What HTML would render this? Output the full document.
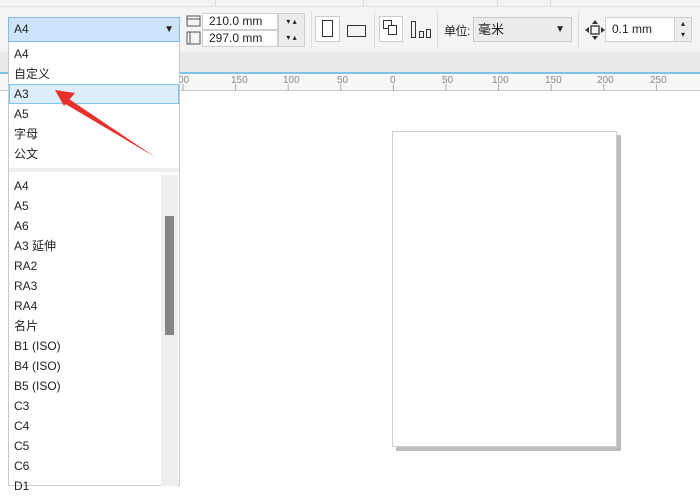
<!DOCTYPE html>
<html><head><meta charset="utf-8"><style>
*{margin:0;padding:0;box-sizing:border-box}
body{width:700px;height:486px;position:relative;overflow:hidden;background:#fff;font-family:"Liberation Sans","Noto Sans CJK SC",sans-serif;font-size:12px;color:#222}
.a{position:absolute}
.sep{position:absolute;width:1px;background:#dcdcdc}
.li{position:absolute;left:14px;font-size:12px;height:20px;line-height:20px}
.inp{position:absolute;background:#fff;border:1px solid #cfcfcf;padding-left:6px;font-size:12px}
</style></head><body>
<div class="a" style="left:0;top:0;width:700px;height:52px;background:#f4f4f4"></div>
<div class="a" style="left:0;top:6px;width:700px;height:1px;background:#e2e2e2"></div>
<div class="sep" style="left:215px;top:0;height:6px"></div>
<div class="sep" style="left:363px;top:0;height:6px"></div>
<div class="sep" style="left:497px;top:0;height:6px"></div>
<div class="sep" style="left:550px;top:0;height:6px"></div>
<div class="a" style="left:0;top:52px;width:700px;height:20px;background:#e9e9e9"></div>
<div class="a" style="left:0;top:72px;width:700px;height:2px;background:#7cc4e6"></div>
<div class="a" style="left:0;top:74px;width:700px;height:17px;background:#f7f7f7;border-bottom:1px solid #ccc"></div>
<svg class="a" style="left:0;top:74px" width="700" height="17">
<g stroke="#aaa" stroke-width="1">
<path d="M183 17v-7M235.6 17v-7M288.2 17v-7M340.8 17v-7M393.4 17v-7M446 17v-7M498.6 17v-7M551.2 17v-7M603.8 17v-7M656.4 17v-7M709 17v-7"/>
</g>
<g fill="#888" font-size="10" font-family="Liberation Sans">
<text x="178" y="9">00</text><text x="231" y="9">150</text><text x="283" y="9">100</text><text x="337" y="9">50</text><text x="390" y="9">0</text><text x="442" y="9">50</text><text x="492" y="9">100</text><text x="545" y="9">150</text><text x="597" y="9">200</text><text x="650" y="9">250</text>
</g>
<path d="M180 16.5h520" stroke="#ccc" stroke-dasharray="1 4.26"/>
</svg>
<div class="a" style="left:396px;top:135px;width:225px;height:316px;background:#bdbdbd"></div>
<div class="a" style="left:392px;top:131px;width:225px;height:316px;background:#fff;border:1px solid #cfcfcf"></div>
<svg class="a" style="left:185px;top:14px" width="18" height="32"><rect x="2" y="2" width="13" height="10" fill="none" stroke="#555"/><path d="M2 5h13" stroke="#555"/><rect x="2" y="18" width="13" height="12" fill="none" stroke="#555"/><path d="M5 18v12" stroke="#555"/></svg>
<div class="inp" style="left:202px;top:13px;width:76px;height:17px;line-height:15px">210.0 mm</div>
<div class="inp" style="left:202px;top:30px;width:76px;height:17px;line-height:15px">297.0 mm</div>
<div class="a" style="left:278px;top:13px;width:27px;height:34px;background:#ececec;border:1px solid #cfcfcf;font-size:8px;line-height:16px;text-align:center">▾ ▴<br>▾ ▴</div>
<div class="sep" style="left:311px;top:12px;height:36px"></div>
<div class="a" style="left:315px;top:16px;width:25px;height:26px;background:#fff;border:1px solid #ccc"></div>
<div class="a" style="left:322px;top:20px;width:11px;height:17px;border:1px solid #333"></div>
<div class="a" style="left:347px;top:25px;width:19px;height:12px;border:1px solid #333"></div>
<div class="sep" style="left:374px;top:12px;height:36px"></div>
<div class="a" style="left:379px;top:16px;width:24px;height:26px;background:#fff;border:1px solid #ccc"></div>
<div class="a" style="left:383px;top:20px;width:9px;height:9px;border:1px solid #333"></div>
<div class="a" style="left:388px;top:25px;width:9px;height:10px;border:1px solid #333;background:#fff"></div>
<svg class="a" style="left:410px;top:20px" width="22" height="20"><rect x="1.5" y="1.5" width="4" height="16" fill="none" stroke="#333"/><rect x="9.5" y="11.5" width="4" height="6" fill="none" stroke="#333"/><rect x="16.5" y="9.5" width="4" height="8" fill="none" stroke="#333"/></svg>
<div class="sep" style="left:437px;top:12px;height:36px"></div>
<div class="a" style="left:444px;top:22px;font-size:12px;letter-spacing:-0.5px">单位:</div>
<div class="a" style="left:473px;top:17px;width:99px;height:25px;background:#ececec;border:1px solid #c8c8c8;padding-left:4px;line-height:23px;font-size:13px">毫米<span style="position:absolute;right:6px;font-size:10px">▼</span></div>
<div class="sep" style="left:578px;top:12px;height:36px"></div>
<svg class="a" style="left:584px;top:20px" width="22" height="20"><rect x="7" y="6" width="8" height="8" fill="none" stroke="#333" stroke-width="1.3"/><path d="M11 0l3 4h-6zM11 20l3-4h-6zM1 10l4-3v6zM21 10l-4-3v6z" fill="#333"/></svg>
<div class="inp" style="left:605px;top:17px;width:70px;height:25px;line-height:23px;border-right:none">0.1 mm</div>
<div class="a" style="left:674px;top:17px;width:18px;height:25px;background:#ececec;border:1px solid #cfcfcf;font-size:8px;line-height:11px;text-align:center">▴<br>▾</div>
<div class="a" style="left:8px;top:17px;width:172px;height:25px;background:#cde5fa;border:1px solid #84bbe8;line-height:23px;padding-left:5px;font-size:12px">A4<span style="position:absolute;right:5px;font-size:10px">▼</span></div>
<div class="a" style="left:8px;top:42px;width:172px;height:444px;background:#fff;border:1px solid #c8c8c8;border-top:none"></div>
<div class="a" style="left:9px;top:84px;width:170px;height:20px;background:#dcedfb;border:1px solid #7fc4ea"></div>
<div class="a" style="left:9px;top:168px;width:170px;height:4px;background:#eee"></div>
<div class="a" style="left:161px;top:175px;width:17px;height:311px;background:#eee"></div>
<div class="a" style="left:165px;top:216px;width:9px;height:119px;background:#858585"></div>
<div class="li" style="top:44px">A4</div>
<div class="li" style="top:64px">自定义</div>
<div class="li" style="top:84px">A3</div>
<div class="li" style="top:104px">A5</div>
<div class="li" style="top:124px">字母</div>
<div class="li" style="top:144px">公文</div>
<div class="li" style="top:176px">A4</div>
<div class="li" style="top:196px">A5</div>
<div class="li" style="top:216px">A6</div>
<div class="li" style="top:236px">A3 延伸</div>
<div class="li" style="top:256px">RA2</div>
<div class="li" style="top:276px">RA3</div>
<div class="li" style="top:296px">RA4</div>
<div class="li" style="top:316px">名片</div>
<div class="li" style="top:336px">B1 (ISO)</div>
<div class="li" style="top:356px">B4 (ISO)</div>
<div class="li" style="top:376px">B5 (ISO)</div>
<div class="li" style="top:396px">C3</div>
<div class="li" style="top:416px">C4</div>
<div class="li" style="top:436px">C5</div>
<div class="li" style="top:456px">C6</div>
<div class="li" style="top:476px">D1</div>
<svg class="a" style="left:0;top:0" width="700" height="486"><path d="M155 157L66 97L62 102Z" fill="#e8302c"/><path d="M55 90L75 93L64 106Z" fill="#e8302c"/></svg>
</body></html>
